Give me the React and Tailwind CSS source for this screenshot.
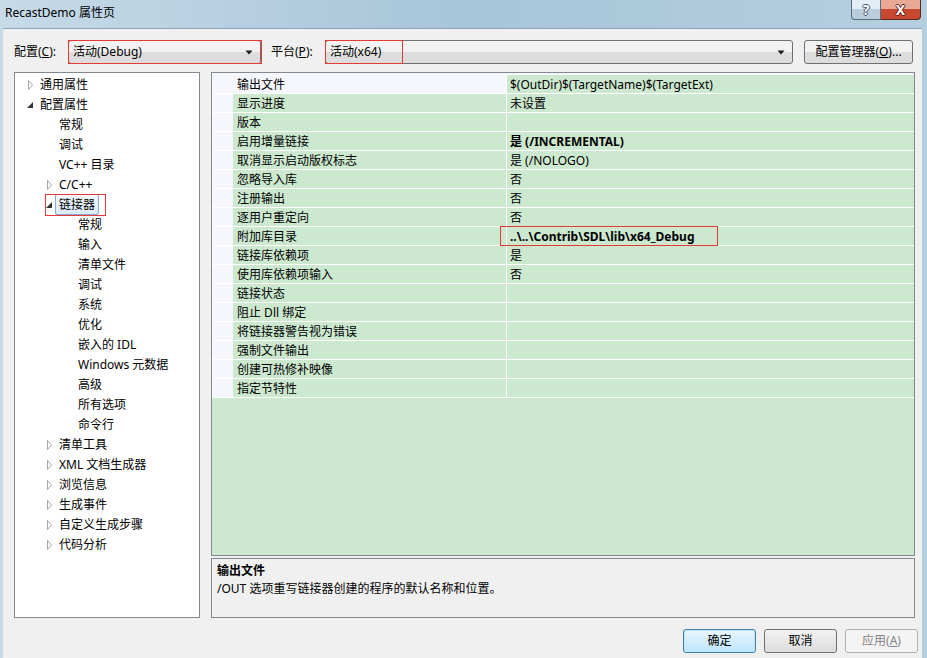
import React from 'react';

const FONT = { fontFamily: '"Segoe UI", "Noto Sans", "Noto Sans CJK SC", sans-serif' };

const tree = [
    { level: 0, label: '通用属性', arrow: 'closed' },
    { level: 0, label: '配置属性', arrow: 'open' },
    { level: 1, label: '常规' },
    { level: 1, label: '调试' },
    { level: 1, label: 'VC++ 目录' },
    { level: 1, label: 'C/C++', arrow: 'closed' },
    { level: 1, label: '链接器', arrow: 'open', selected: true },
    { level: 2, label: '常规' },
    { level: 2, label: '输入' },
    { level: 2, label: '清单文件' },
    { level: 2, label: '调试' },
    { level: 2, label: '系统' },
    { level: 2, label: '优化' },
    { level: 2, label: '嵌入的 IDL' },
    { level: 2, label: 'Windows 元数据' },
    { level: 2, label: '高级' },
    { level: 2, label: '所有选项' },
    { level: 2, label: '命令行' },
    { level: 1, label: '清单工具', arrow: 'closed' },
    { level: 1, label: 'XML 文档生成器', arrow: 'closed' },
    { level: 1, label: '浏览信息', arrow: 'closed' },
    { level: 1, label: '生成事件', arrow: 'closed' },
    { level: 1, label: '自定义生成步骤', arrow: 'closed' },
    { level: 1, label: '代码分析', arrow: 'closed' },
];

const rows = [
    { name: '输出文件', value: '$(OutDir)$(TargetName)$(TargetExt)', current: true },
    { name: '显示进度', value: '未设置' },
    { name: '版本', value: '' },
    { name: '启用增量链接', value: '是 (/INCREMENTAL)', bold: true },
    { name: '取消显示启动版权标志', value: '是 (/NOLOGO)' },
    { name: '忽略导入库', value: '否' },
    { name: '注册输出', value: '否' },
    { name: '逐用户重定向', value: '否' },
    { name: '附加库目录', value: '..\\..\\Contrib\\SDL\\lib\\x64_Debug', bold: true, marked: true },
    { name: '链接库依赖项', value: '是' },
    { name: '使用库依赖项输入', value: '否' },
    { name: '链接状态', value: '' },
    { name: '阻止 Dll 绑定', value: '' },
    { name: '将链接器警告视为错误', value: '' },
    { name: '强制文件输出', value: '' },
    { name: '创建可热修补映像', value: '' },
    { name: '指定节特性', value: '' },
];

const indent = ['pl-[9px]', 'pl-[28px]', 'pl-[47px]'];

const Arrow = ({ kind }) => {
    if (kind === 'closed') {
        return (
            <svg width="16" height="20" viewBox="0 0 16 20">
                <path d="M4.5 5.5 L8.5 10 L4.5 14.5 Z" fill="none" stroke="#a6a6a6" strokeWidth="1" />
            </svg>
        );
    }
    if (kind === 'open') {
        return (
            <svg width="16" height="20" viewBox="0 0 16 20">
                <path d="M9 7 L9 13 L3 13 Z" fill="#333333" />
            </svg>
        );
    }
    return <span className="w-[16px]" />;
};

const ComboArrow = () => (
    <svg width="8" height="5" viewBox="0 0 8 5" className="shrink-0">
        <path d="M0.5 0.5 L7.5 0.5 L4 4.5 Z" fill="#1a1a1a" />
    </svg>
);

const Combo = ({ text, width }) => (
    <div className={`${width} h-[24px] flex items-center justify-between pl-[4px] pr-[7px] border border-[#707070] rounded-[3px] bg-gradient-to-b from-[#f2f2f2] from-50% to-[#dddddd] to-50% text-[12px] text-black`}>
        <span>{text}</span>
        <ComboArrow />
    </div>
);

const Button = ({ children, variant }) => {
    const styles = {
        default: 'border-[#3c7fb1] from-[#eaf6fd] to-[#bee6fd] text-black shadow-[inset_0_0_0_1px_#c6e7f9]',
        normal: 'border-[#707070] from-[#f2f2f2] to-[#dddddd] text-black',
        disabled: 'border-[#adb2b5] from-[#f4f4f4] to-[#f4f4f4] text-[#838383]',
    };
    return (
        <div className={`w-[73px] h-[24px] flex items-center justify-center border rounded-[3px] bg-gradient-to-b text-[12px] ${styles[variant]}`}>
            {children}
        </div>
    );
};

export default function App() {
    return (
        <div style={FONT} className="w-[927px] h-[658px] flex flex-col overflow-hidden bg-gradient-to-r from-[#c6dae8] via-[#a7c5d9] to-[#b5cfe0]">
            {/* title bar */}
            <div className="h-[28px] flex items-start shrink-0">
                <div className="pl-[5px] pt-[5px] text-[12px] text-black leading-[16px]">RecastDemo 属性页</div>
                <div className="ml-auto mr-[6px] flex">
                    <div className="w-[30px] h-[20px] flex items-center justify-center border border-[#5a6b7d] border-t-0 rounded-bl-[4px] bg-gradient-to-b from-[#e3edf5] from-45% to-[#b9cddd] to-45% text-[14px] leading-none font-bold text-white [text-shadow:1px_0_0_#44546a,-1px_0_0_#44546a,0_1px_0_#44546a,0_-1px_0_#44546a]">
                        ?
                    </div>
                    <div className="w-[40px] h-[20px] flex items-center justify-center border border-[#5a2a22] border-l-0 border-t-0 rounded-br-[4px] bg-gradient-to-b from-[#e8a895] from-45% to-[#c8472f] to-45% text-[14px] leading-none font-bold text-white [text-shadow:1px_0_0_#5a1e14,-1px_0_0_#5a1e14,0_1px_0_#5a1e14,0_-1px_0_#5a1e14]">
                        X
                    </div>
                </div>
            </div>

            {/* dialog body */}
            <div className="flex-1 ml-[3px] mr-[5px] bg-[#f0f0f0] border-t border-[#8ea5bd] flex flex-col pt-[11px] pl-[11px]">
                <div className="flex items-center h-[24px] text-[12px] text-black">
                    <span className="w-[54px] shrink-0">配置(<u>C</u>):</span>
                    <div className="relative">
                        <Combo text="活动(Debug)" width="w-[193px]" />
                        <div className="absolute left-0 top-0 w-[194px] h-[24px] border border-[#e53935] pointer-events-none" />
                    </div>
                    <span className="w-[64px] shrink-0 pl-[10px]">平台(<u>P</u>):</span>
                    <div className="relative">
                        <Combo text="活动(x64)" width="w-[468px]" />
                        <div className="absolute left-0 top-0 w-[78px] h-[24px] border border-[#e53935] pointer-events-none" />
                    </div>
                    <div className="ml-[11px] w-[109px] h-[24px] flex items-center justify-center border border-[#707070] rounded-[3px] bg-gradient-to-b from-[#f2f2f2] from-50% to-[#dddddd] to-50%">
                        配置管理器(<u>O</u>)...
                    </div>
                </div>

                <div className="flex mt-[8px] h-[546px] gap-[11px]">
                    {/* tree */}
                    <div className="w-[186px] h-full bg-white border border-[#828790] pt-[2px] text-[12px] text-black">
                        {tree.map((item, i) => (
                            <div key={i} className={`h-[20px] flex items-center ${indent[item.level]}`}>
                                <Arrow kind={item.arrow} />
                                {item.selected ? (
                                    <span className="relative -ml-[4px]">
                                        <span className="px-[3px] py-px rounded-[2px] border border-[#84acdd] bg-gradient-to-b from-[#f2f8fe] to-[#dceafc]">{item.label}</span>
                                        <span className="absolute left-[-10px] right-[-7px] top-[-2px] bottom-[-2px] border border-[#e53935]" />
                                    </span>
                                ) : (
                                    <span>{item.label}</span>
                                )}
                            </div>
                        ))}
                    </div>

                    {/* grid + description */}
                    <div className="w-[704px] flex flex-col gap-[2px]">
                        <div className="h-[484px] border border-[#828790] flex flex-col bg-[#cce8cf] text-[12px] text-black">
                            <div className="h-[2px] bg-[#f5f7fc] shrink-0" />
                            {rows.map((r, i) => (
                                <div key={i} className="h-[19px] shrink-0 flex border-b border-white">
                                    <div className="w-[21px] bg-[#f5f7fc]" />
                                    <div className={`w-[274px] flex items-center pl-[4px] pt-px border-r border-white ${r.current ? 'bg-[#f5f7fc]' : ''}`}>
                                        {r.name}
                                    </div>
                                    <div className="flex-1 relative flex items-center pl-[3px] pt-px">
                                        <span className={r.bold ? 'font-bold' : ''}>{r.value}</span>
                                        {r.marked && (
                                            <div className="absolute left-[-7px] top-[-1px] w-[218px] h-[20px] border border-[#e53935]" />
                                        )}
                                    </div>
                                </div>
                            ))}
                            <div className="flex-1" />
                        </div>
                        <div className="h-[60px] border border-[#828790] bg-[#f0f0f0] px-[5px] pt-[3px] text-[12px] text-black">
                            <div className="h-[18px] flex items-center font-bold">输出文件</div>
                            <div className="h-[18px] flex items-center">/OUT 选项重写链接器创建的程序的默认名称和位置。</div>
                        </div>
                    </div>
                </div>

                <div className="flex justify-end gap-[8px] mt-[11px] pr-[4px]">
                    <Button variant="default">确定</Button>
                    <Button variant="normal">取消</Button>
                    <Button variant="disabled">应用(<u>A</u>)</Button>
                </div>
            </div>
        </div>
    );
}
